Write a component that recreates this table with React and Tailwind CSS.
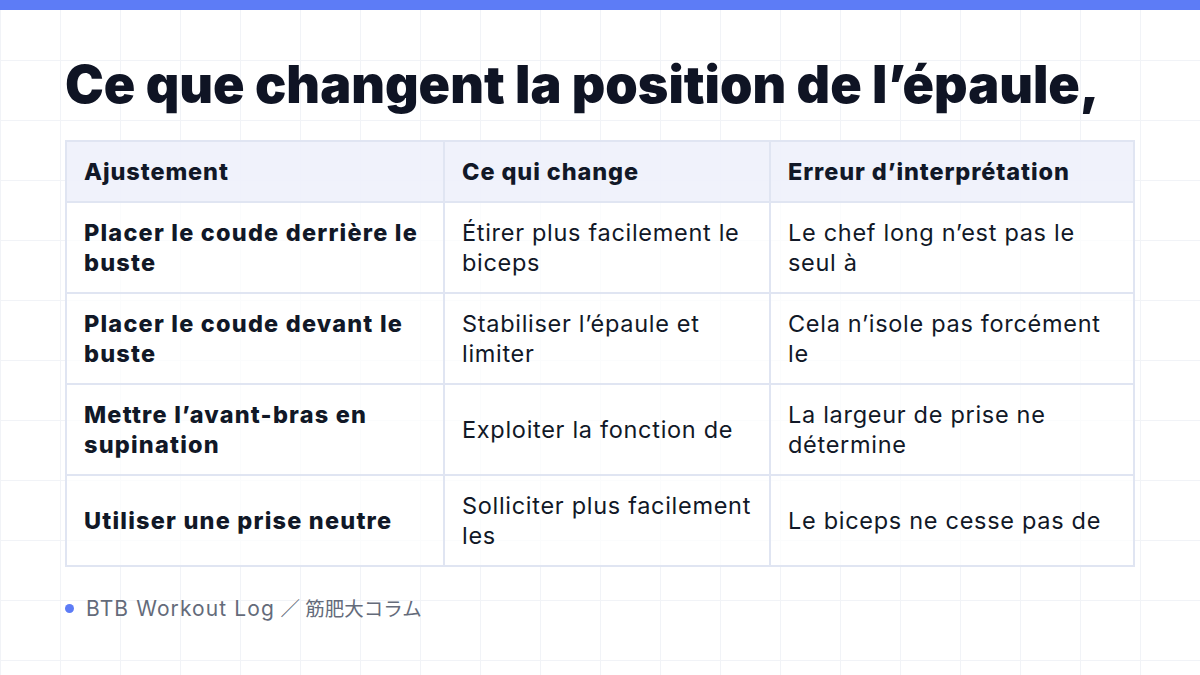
const ROWS = [
  ['Placer le coude derrière le buste', 'Étirer plus facilement le biceps', 'Le chef long n’est pas le seul à'],
  ['Placer le coude devant le buste', 'Stabiliser l’épaule et limiter', 'Cela n’isole pas forcément le'],
  ['Mettre l’avant-bras en supination', 'Exploiter la fonction de', 'La largeur de prise ne détermine'],
  ['Utiliser une prise neutre', 'Solliciter plus facilement les', 'Le biceps ne cesse pas de'],
];

export default function App() {
  return (
    <div
      className="w-[1200px] h-[675px] overflow-hidden bg-white bg-[linear-gradient(to_right,#f1f3f7_1px,transparent_1px),linear-gradient(to_bottom,#f1f3f7_1px,transparent_1px)] bg-[size:60px_60px] text-[#111827]"
      style={{ fontFamily: 'Inter, "Noto Sans CJK JP", sans-serif' }}
    >
      <div className="h-[10px] bg-[#5d7cf6]" />
      <div className="px-[65px] pt-[44px]">
        <h1 className="text-[52px] leading-[62px] font-black tracking-[0px] text-[#0f1424]">
          Ce que changent la position de l’épaule,
        </h1>
        <table className="mt-[24px] w-[1070px] table-fixed border-collapse border-2 border-[#e0e5f2] text-[23.5px] leading-[30px] tracking-[0.7px]">
          <thead>
            <tr className="h-[61px] bg-[#eef1fb]/90">
              <th className="w-[378px] border-2 border-[#e0e5f2] pl-[17px] pr-[10px] text-left font-extrabold tracking-[0.9px]">Ajustement</th>
              <th className="w-[326px] border-2 border-[#e0e5f2] pl-[17px] pr-[10px] text-left font-extrabold tracking-[0.9px]">Ce qui change</th>
              <th className="border-2 border-[#e0e5f2] pl-[17px] pr-[10px] text-left font-extrabold tracking-[0.9px]">Erreur d’interprétation</th>
            </tr>
          </thead>
          <tbody>
            {ROWS.map((r, i) => (
              <tr key={i} className="h-[91px] bg-white/70">
                <td className="border-2 border-[#e0e5f2] pl-[17px] pr-[10px] align-middle font-extrabold tracking-[1.2px]">{r[0]}</td>
                <td className="border-2 border-[#e0e5f2] pl-[17px] pr-[10px] align-middle">{r[1]}</td>
                <td className="border-2 border-[#e0e5f2] pl-[17px] pr-[10px] align-middle">{r[2]}</td>
              </tr>
            ))}
          </tbody>
        </table>
        <div className="mt-[26px] flex items-center gap-[12px] text-[#646b7a]">
          <span className="w-[9px] h-[9px] rounded-full bg-[#5d7cf6]" />
          <span className="text-[21px]">
            <span className="tracking-[1.1px]">BTB Workout Log</span>
            <span className="text-[19.5px]"> ／ 筋肥大コラム</span>
          </span>
        </div>
      </div>
    </div>
  );
}
